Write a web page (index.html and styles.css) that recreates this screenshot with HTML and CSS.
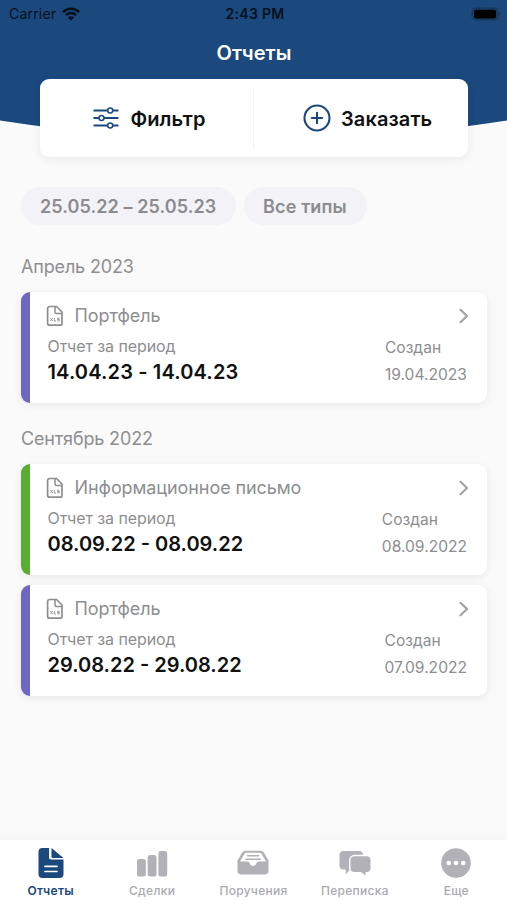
FILE: index.html
```html
<!DOCTYPE html>
<html lang="ru">
<head>
<meta charset="utf-8">
<title>Отчеты</title>
<link rel="stylesheet" href="styles.css">
</head>
<body>
<svg class="defs" width="0" height="0" aria-hidden="true">
  <symbol id="xls" viewBox="0 0 18 22">
    <path d="M3.600 1.500h6.900l5.500 5.500V18.200a2 2 0 0 1-2 2H3.600a2 2 0 0 1-2-2V3.500a2 2 0 0 1 2-2z" fill="none" stroke="#8e8e90" stroke-width="1.700"/>
    <path d="M9 2v5a1.500 1.500 0 0 0 1.500 1.500H16" fill="none" stroke="#8e8e90" stroke-width="1.500"/>
    <path d="M4.300 13l2.400 3M6.700 13l-2.400 3M8.300 13v3h1.800M13.400 13.200h-1.900v1.300h1.900v1.300h-2" fill="none" stroke="#8e8e90" stroke-width=".9"/>
  </symbol>
  <symbol id="chevron" viewBox="0 0 10 16">
    <path d="M1.500 1.800L8 8l-6.500 6.200" fill="none" stroke="#a2a2a4" stroke-width="2.200" stroke-linecap="round" stroke-linejoin="round"/>
  </symbol>
</svg>
<div class="app">
  <header class="header">
    <svg class="curve" viewBox="0 0 507 150" preserveAspectRatio="none"><path d="M0 0H507V120.500Q253.500 160 0 120.500Z" fill="#1b487d"/></svg>
    <div class="status">
      <div class="carrier"><span>Carrier</span>
        <svg width="18" height="14" viewBox="0 0 18 14" fill="none" stroke="#06101c" stroke-width="2.500"><path d="M.9 5.200a11.500 11.500 0 0 1 16.200 0M3.900 8.200a7.300 7.300 0 0 1 10.200 0"/><path d="M9 13.800L5.900 10.500a4.400 4.400 0 0 1 6.200 0z" fill="#06101c" stroke="none"/></svg>
      </div>
      <span class="time">2:43 PM</span>
      <svg class="battery" width="30" height="14" viewBox="0 0 30 14"><rect x="1" y="1" width="26" height="12" rx="3.500" fill="#173e6c" stroke="#153759"/><rect x="3" y="2.800" width="22" height="8.600" rx="2" fill="#000"/><path d="M28.200 5v4q1.600-.7 1.600-2t-1.600-2z" fill="#12345b"/></svg>
    </div>
    <h1 class="title">Отчеты</h1>
    <div class="actions">
      <div class="action filter">
        <svg width="26" height="24" viewBox="0 0 26 24" fill="#fff" stroke="#1b487d"><path d="M.5 4.500h25M.5 12h25M.5 19.500h25" stroke-width="1.900"/><g stroke-width="1.500"><circle cx="17.200" cy="4.500" r="2.500"/><circle cx="8.500" cy="12" r="2.500"/><circle cx="17.200" cy="19.500" r="2.500"/></g></svg>
        <span>Фильтр</span>
      </div>
      <div class="action order">
        <svg width="28" height="28" viewBox="0 0 28 28" fill="none" stroke="#1b487d" stroke-width="2.100"><circle cx="14" cy="14" r="12.500"/><path d="M14 8.800v10.400M8.800 14h10.400" stroke-linecap="round"/></svg>
        <span>Заказать</span>
      </div>
    </div>
  </header>
  <main class="content">
    <div class="chips"><span class="chip range">25.05.22 – 25.05.23</span><span class="chip types">Все типы</span></div>
    <h2 class="month">Апрель 2023</h2>
    <article class="card purple">
      <div class="card-top"><svg class="file"><use href="#xls"/></svg><span class="name">Портфель</span><svg class="chev"><use href="#chevron"/></svg></div>
      <div class="card-body">
        <div><div class="label">Отчет за период</div><div class="period wide">14.04.23 - 14.04.23</div></div>
        <div class="created"><div>Создан</div><div>19.04.2023</div></div>
      </div>
    </article>
    <h2 class="month">Сентябрь 2022</h2>
    <article class="card green">
      <div class="card-top"><svg class="file"><use href="#xls"/></svg><span class="name">Информационное письмо</span><svg class="chev"><use href="#chevron"/></svg></div>
      <div class="card-body">
        <div><div class="label">Отчет за период</div><div class="period">08.09.22 - 08.09.22</div></div>
        <div class="created"><div>Создан</div><div>08.09.2022</div></div>
      </div>
    </article>
    <article class="card purple">
      <div class="card-top"><svg class="file"><use href="#xls"/></svg><span class="name">Портфель</span><svg class="chev"><use href="#chevron"/></svg></div>
      <div class="card-body">
        <div><div class="label">Отчет за период</div><div class="period">29.08.22 - 29.08.22</div></div>
        <div class="created"><div>Создан</div><div>07.09.2022</div></div>
      </div>
    </article>
  </main>
  <nav class="tabs">
    <div class="tab active">
      <svg width="32" height="32" viewBox="0 0 32 32"><path d="M7 1h7v9.500a2 2 0 0 0 2 2h12.500V27a4 4 0 0 1-4 4h-17a4 4 0 0 1-4-4V5a4 4 0 0 1 4-4z" fill="#1b487d"/><path d="M16.500 1L28.500 11h-11a1 1 0 0 1-1-1z" fill="#1b487d"/><path d="M10 19.300h12M10 24.500h12" stroke="#fff" stroke-width="1.700" stroke-linecap="round"/></svg>
      <span>Отчеты</span>
    </div>
    <div class="tab">
      <svg width="32" height="32" viewBox="0 0 32 32" fill="#b1b1b7"><rect x="1" y="12" width="8.800" height="17.500" rx="2.500"/><rect x="11.700" y="8" width="8.800" height="21.500" rx="2.500"/><rect x="22.400" y="4" width="8.800" height="25.500" rx="2.500"/></svg>
      <span>Сделки</span>
    </div>
    <div class="tab">
      <svg width="34" height="32" viewBox="0 0 34 32"><path d="M9.500 3.800h15a4 4 0 0 1 3.300 1.800L32.500 13.500v10a4 4 0 0 1-4 4h-23a4 4 0 0 1-4-4v-10l4.700-7.900A4 4 0 0 1 9.500 3.800z" fill="#b1b1b7"/><path d="M4 14.500L8.400 7q.6-1.200 1.900-1.200h13.400q1.300 0 1.900 1.200L30 14.500h-7.500q-1.500 0-2 1.500-.8 3-3.500 3t-3.500-3q-.5-1.500-2-1.500z" fill="#fff"/><path d="M11.500 8.800h11M9.800 12.300h14.400" stroke="#b1b1b7" stroke-width="1.400" stroke-linecap="round"/></svg>
      <span>Поручения</span>
    </div>
    <div class="tab">
      <svg width="34" height="32" viewBox="0 0 34 32"><path d="M5.500 4h15.500a4 4 0 0 1 4 4v10.500a4 4 0 0 1-4 4h-9L7.800 27.500v-5H5.500a4 4 0 0 1-4-4V8a4 4 0 0 1 4-4z" fill="#b1b1b7"/><path d="M16.500 9.300h12a4 4 0 0 1 4 4v7.700a4 4 0 0 1-4 4h-1v3.500l-4.500-3.500h-6.500a4 4 0 0 1-4-4v-7.700a4 4 0 0 1 4-4z" fill="#b1b1b7" stroke="#fff" stroke-width="3" paint-order="stroke"/></svg>
      <span>Переписка</span>
    </div>
    <div class="tab">
      <svg width="32" height="32" viewBox="0 0 32 32"><circle cx="16" cy="16" r="14.800" fill="#b1b1b7"/><g fill="#fff"><circle cx="8.700" cy="16" r="2.300"/><circle cx="16" cy="16" r="2.300"/><circle cx="23.300" cy="16" r="2.300"/></g></svg>
      <span>Еще</span>
    </div>
  </nav>
</div>
</body>
</html>
```

FILE: styles.css
```css
* { box-sizing: border-box; }
body { margin: 0; font-family: Inter, "Liberation Sans", sans-serif; background: #fafafa; color: #111; }
.defs { position: absolute; }
.app { width: 507px; height: 900px; display: flex; flex-direction: column; overflow: hidden; }
.header { position: relative; height: 157px; flex: none; }
.curve { position: absolute; left: 0; top: 0; width: 507px; height: 150px; z-index: -1; }
.status { height: 28px; display: grid; grid-template-columns: 1fr auto 1fr; align-items: center; padding: 0 6px 0 9px; font-size: 14px; line-height: 28px; color: #06101c; }
.carrier { display: flex; align-items: center; gap: 6px; letter-spacing: .2px; }
.time { font-weight: 600; letter-spacing: .3px; }
.battery { justify-self: end; }
.title { margin: 11px 0 0; height: 26px; line-height: 28px; font-size: 20px; font-weight: 600; letter-spacing: .1px; text-indent: 1px; text-align: center; color: #fff; }
.actions { margin: 14px 39px 0 40px; height: 78px; display: grid; grid-template-columns: 214px 1fr; background: #fff; border-radius: 9px; box-shadow: 0 2px 10px rgba(0,0,0,.07); }
.action { display: flex; align-items: center; font-size: 20px; font-weight: 600; }
.action span { padding-top: 1px; letter-spacing: .1px; }
.filter { padding-left: 53px; gap: 11.500px; position: relative; }
.filter::after { content: ""; position: absolute; right: 0; top: 8px; bottom: 8px; width: 1px; background: #f4f4f6; }
.order { padding-left: 49px; gap: 10px; }
.content { flex: 1; padding: 30px 20px 0 21px; }
.chips { display: flex; gap: 8px; height: 38px; }
.chip { line-height: 39px; border-radius: 19px; background: #f3f3f7; color: #8b8b8f; font-size: 18px; font-weight: 600; padding-left: 19px; }
.range { width: 215px; letter-spacing: .08px; }
.types { width: 123px; letter-spacing: .15px; }
.month { margin: 25px 0 9px; height: 33px; line-height: 33px; font-size: 18px; font-weight: 400; letter-spacing: -.15px; color: #8e8e90; }
.card { height: 111px; margin-bottom: 10px; border-left: 9px solid; border-radius: 9px; background: #fff; padding: 12px 18px 0 16px; box-shadow: 0 2px 9px rgba(0,0,0,.08); }
.card + .month { margin-top: 19px; }
.purple { border-left-color: #7068c0; }
.green { border-left-color: #58ad32; }
.card-top { display: flex; align-items: center; height: 24px; }
.file { width: 18px; height: 22px; }
.name { flex: 1; margin: -2px 0 0 10.500px; font-size: 18px; letter-spacing: -.08px; color: #8e8e90; }
.chev { width: 10px; height: 16px; }
.card-body { display: flex; justify-content: space-between; margin: 0 2px 0 1.500px; }
.label { font-size: 16px; line-height: 22px; margin-top: 7px; letter-spacing: -.08px; color: #8e8e90; }
.period { font-size: 20px; line-height: 28px; font-weight: 600; margin-top: 1px; }
.wide { letter-spacing: .15px; }
.created { margin-top: 7px; font-size: 15.600px; line-height: 26.500px; color: #8e8e90; }
.tabs { height: 60px; flex: none; display: grid; grid-template-columns: repeat(5, 1fr); background: #fff; box-shadow: 0 0 8px rgba(0,0,0,.05); }
.tab { display: flex; flex-direction: column; align-items: center; padding-top: 7px; font-size: 12px; line-height: 16px; font-weight: 500; color: #aaaab0; }
.tab span { margin-top: 4px; letter-spacing: .3px; }
.tab.active { color: #1b487d; font-weight: 600; }
```
